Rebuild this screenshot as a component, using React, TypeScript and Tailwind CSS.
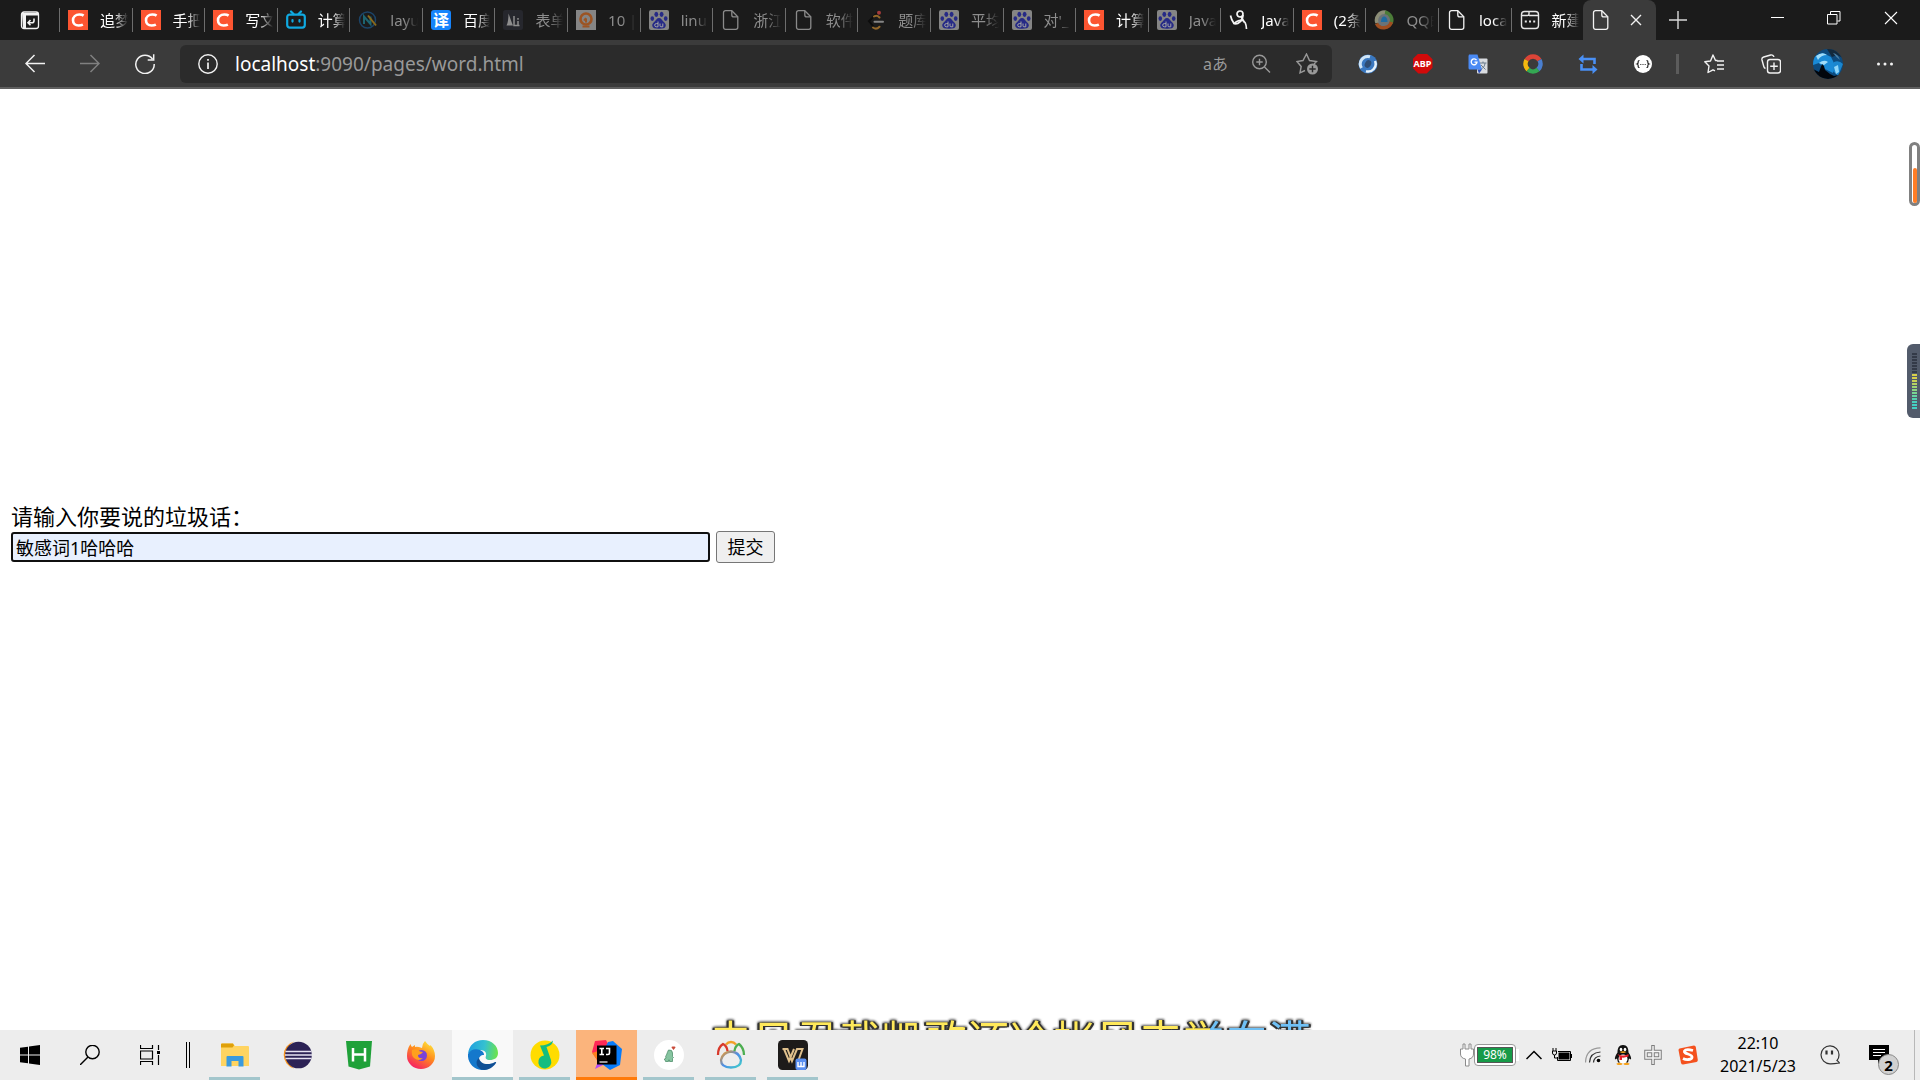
import React from "react";

type P = { children?: React.ReactNode };

const Csdn = () => (
  <svg viewBox="0 0 20 20" className="size-5">
    <rect width="20" height="20" fill="#fc5531" />
    <path d="M15.6 5.6C14.5 4.8 13 4.5 11.3 4.5 7.6 4.5 5 6.9 5 10.3c0 3.100 2.200 5.200 5.600 5.200 1.700 0 3.100-.3 4.300-.9" fill="none" stroke="#fff" strokeWidth="2.600" />
  </svg>
);

const Bili = () => (
  <svg viewBox="0 0 20 20" className="size-5" fill="none" stroke="#10a9e0" strokeWidth="2.200" strokeLinecap="round">
    <rect x="1.200" y="4.600" width="17.600" height="13" rx="2.500" />
    <path d="M5 1.500l2.500 2.600M15 1.500l-2.500 2.600M6.500 10v1.600M13.500 10v1.600" />
  </svg>
);

const Layui = () => (
  <svg viewBox="0 0 20 20" className="size-5" fill="none">
    <circle cx="9.500" cy="10" r="8" stroke="#1c4468" strokeWidth="1.500" />
    <path d="M6 14V6.500l6.500 7.500V6.500" stroke="#1d6470" strokeWidth="2" />
    <path d="M10 5.500l8 10" stroke="#8a6a1c" strokeWidth="2" />
  </svg>
);

const Translate = () => (
  <span className="flex size-5 items-center justify-center rounded-[3px] bg-[#1684fc] text-base leading-5 font-bold text-white">译</span>
);

const LiDark = () => (
  <svg viewBox="0 0 20 20" className="size-5">
    <rect width="20" height="20" rx="2.500" fill="#26272d" />
    <path d="M3.500 15.500C5 13 5.500 8 5.500 3.500c1.500 4 3 8.500 4.500 12z" fill="#8e8e8e" />
    <path d="M11 6v9.500h5.500M15 8v1.800M15 11v4.500" stroke="#8e8e8e" strokeWidth="1.500" fill="none" />
  </svg>
);

const OrangeO = () => (
  <svg viewBox="0 0 20 20" className="size-5" fill="none">
    <rect width="20" height="20" fill="#858585" />
    <circle cx="10" cy="9" r="5.500" stroke="#9c5423" strokeWidth="2.600" />
    <path d="M10 8.500v4M8 10.500l2-2.500M6.500 16.500h7" stroke="#9c5423" strokeWidth="2" />
  </svg>
);

const Baidu = () => (
  <svg viewBox="0 0 20 20" className="size-5">
    <rect width="20" height="20" rx="2" fill="#858585" />
    <g fill="#262a86">
      <ellipse cx="7.300" cy="4.300" rx="1.900" ry="2.600" />
      <ellipse cx="12.600" cy="4.300" rx="1.900" ry="2.600" />
      <ellipse cx="3.300" cy="8.600" rx="1.800" ry="2.400" />
      <ellipse cx="16.700" cy="8.600" rx="1.800" ry="2.400" />
      <path d="M10 8c2.200 0 2.800 2 4.300 3.500 1.600 1.500 2.900 2.700 2.400 4.600-.6 2.300-2.700 2.600-6.700 2.600s-6.100-.3-6.700-2.600c-.5-1.900.8-3.100 2.400-4.600C7.200 10 7.800 8 10 8z" />
    </g>
    <path d="M9 11.500v5.300H7.300a1.500 1.500 0 010-3.200H9M11 13.500v2.300q0 1 1 1h1.800v-3.300" fill="none" stroke="#a5a5a5" strokeWidth="1" />
  </svg>
);

const Doc = ({ c = "#f2f2f2" }: { c?: string }) => (
  <svg viewBox="0 0 20 20" className="size-5" fill="none" stroke={c} strokeWidth="1.300">
    <path d="M4.500.7h6.300l6 6v10.600a2 2 0 01-2 2H4.500a2 2 0 01-2-2V2.700a2 2 0 012-2z" />
    <path d="M10.800.9v4a2 2 0 002 2h3.900" />
  </svg>
);

const Leet = () => (
  <svg viewBox="0 0 20 20" className="size-5" fill="none" strokeWidth="2" strokeLinecap="round">
    <path d="M11 3.500L3 11l4 5" stroke="#0c0c0c" />
    <path d="M8 6.500c2.500-1.500 4-.5 5.500 1M7 17.500c3 2.300 5 .8 6.500-.8" stroke="#94682a" />
    <path d="M8.500 11.800H17" stroke="#858585" />
    <circle cx="13" cy="2.800" r="2" fill="#a33b3b" />
  </svg>
);

const Runner = () => (
  <svg viewBox="0 0 20 20" className="size-5" fill="none" stroke="#f5f5f5" strokeWidth="1.700" strokeLinejoin="round">
    <path d="M1.500 5.500c.5 3 1.500 5 3.500 8 4 1.500 9-3 9-8.500" />
    <circle cx="11" cy="4" r="3" />
    <path d="M4.500 14c3-3 6-4 9-3.500 2.500.5 3.800 4.500 4 8.500M12 6.500l3.500 6" />
  </svg>
);

const QQBrowser = () => (
  <svg viewBox="0 0 20 20" className="size-5" fill="none" strokeWidth="3.500">
    <circle cx="10" cy="10" r="7" fill="#6a7378" />
    <path d="M3 13A8 8 0 0112 2.300" stroke="#8c8d77" />
    <path d="M11 2.200A8 8 0 0117 13.500" stroke="#4b7c38" />
    <path d="M17.300 12A8 8 0 012.500 13.500" stroke="#a04e20" />
    <path d="M7 12c0-3 1-5.500 3.200-5.500S13.500 9 13.500 12z" fill="#1f6ba0" />
  </svg>
);

const NewTab = () => (
  <svg viewBox="0 0 20 20" className="size-5" fill="none" stroke="#e6e6e6" strokeWidth="1.400">
    <rect x="1.500" y="1.500" width="17" height="17" rx="3" />
    <path d="M1.500 5.500h6q1.500 0 1.500-1.500V1.500M9 5.500h9.500" />
    <path d="M4.800 11.500h2M9 11.500h2M13.200 11.500h2" strokeWidth="2" />
  </svg>
);

const tabs: { icon: React.ReactNode; text: string; dim?: boolean }[] = [
  { icon: <Csdn />, text: "追梦" },
  { icon: <Csdn />, text: "手把" },
  { icon: <Csdn />, text: "写文" },
  { icon: <Bili />, text: "计算" },
  { icon: <Layui />, text: "layui", dim: true },
  { icon: <Translate />, text: "百度" },
  { icon: <LiDark />, text: "表单", dim: true },
  { icon: <OrangeO />, text: "10 |", dim: true },
  { icon: <Baidu />, text: "linux", dim: true },
  { icon: <Doc c="#8a8a8a" />, text: "浙江", dim: true },
  { icon: <Doc c="#8a8a8a" />, text: "软件", dim: true },
  { icon: <Leet />, text: "题库", dim: true },
  { icon: <Baidu />, text: "平均", dim: true },
  { icon: <Baidu />, text: "对'_", dim: true },
  { icon: <Csdn />, text: "计算" },
  { icon: <Baidu />, text: "Java", dim: true },
  { icon: <Runner />, text: "Java" },
  { icon: <Csdn />, text: "(2条" },
  { icon: <QQBrowser />, text: "QQ邮", dim: true },
  { icon: <Doc />, text: "local" },
  { icon: <NewTab />, text: "新建" },
];

const IconButton = ({ label, w, children }: P & { label: string; w: string }) => (
  <button type="button" aria-label={label} className={`flex h-full shrink-0 items-center justify-center ${w}`}>
    {children}
  </button>
);

function TabStrip() {
  return (
    <div className="flex h-10 items-stretch bg-[#1b1b1b]">
      <IconButton label="标签操作菜单" w="w-[59px]">
        <svg viewBox="0 0 20 20" className="size-5" fill="none" stroke="#f2f2f2" strokeWidth="1.300">
          <rect x="1.500" y="2" width="17" height="16.500" rx="2.500" />
          <path d="M2 3h16v2.500H6V18H3z" fill="#f2f2f2" stroke="none" />
          <path d="M14 8.500v2.300a2 2 0 01-2 2H8M10.500 10L8 12.800l2.500 2.500" strokeWidth="1.600" />
        </svg>
      </IconButton>
      <nav aria-label="标签页" className="flex min-w-0 flex-1">
        {tabs.map((t, i) => (
          <button key={i} type="button" className="relative flex min-w-0 flex-1 items-center gap-3 pr-1 pl-[9px] text-left">
            <span className="absolute top-2 left-0 h-6 w-px bg-[#6d6d6d]" />
            <span className="shrink-0">{t.icon}</span>
            <span
              className={`min-w-0 flex-1 overflow-hidden text-[15px] leading-5 whitespace-nowrap [mask-image:linear-gradient(to_right,black_50%,transparent)] ${t.dim ? "text-[#8d8d8d]" : "text-white"}`}
            >
              {t.text}
            </span>
          </button>
        ))}
      </nav>
      <div className="flex w-[73px] items-center justify-between rounded-t-lg bg-[#3b3b3b] pr-[14px] pl-2">
        <Doc />
        <button type="button" aria-label="关闭标签页">
          <svg viewBox="0 0 12 12" className="size-3" stroke="#f2f2f2" strokeWidth="1.400">
            <path d="M1 1l10 10M11 1L1 11" />
          </svg>
        </button>
      </div>
      <div className="flex w-[264px] pr-px">
        <IconButton label="新建标签页" w="w-11">
          <svg viewBox="0 0 18 18" className="size-[18px]" stroke="#d8d8d8" strokeWidth="1.400">
            <path d="M9 0v18M0 9h18" />
          </svg>
        </IconButton>
        <div className="ml-auto flex h-9">
          <IconButton label="最小化" w="w-[57px]">
            <svg viewBox="0 0 14 14" className="size-[14px]" stroke="#fff">
              <path d="M1 6.500h13" />
            </svg>
          </IconButton>
          <IconButton label="还原" w="w-[57px]">
            <svg viewBox="0 0 14 14" className="size-[14px]" fill="none" stroke="#fff">
              <path d="M.5 3.500h9.500v9.500H.5zM3.500 3V.5h9.500V10h-2.500" />
            </svg>
          </IconButton>
          <IconButton label="关闭" w="w-[57px]">
            <svg viewBox="0 0 14 14" className="size-[14px]" stroke="#fff" strokeWidth="1.100">
              <path d="M1 1l12 12M13 1L1 13" />
            </svg>
          </IconButton>
        </div>
      </div>
    </div>
  );
}

function Toolbar() {
  return (
    <div className="flex h-[49px] items-center border-b-2 border-[#5f5f5f] bg-[#3b3b3b] pr-[7px] pl-[7px]">
      <IconButton label="后退" w="w-[55px]">
        <svg viewBox="0 0 20 20" className="size-5" fill="none" stroke="#f2f2f2" strokeWidth="1.500">
          <path d="M20 9.500H1M9.500 1L1 9.500 9.500 18" />
        </svg>
      </IconButton>
      <IconButton label="前进" w="w-[55px]">
        <svg viewBox="0 0 20 20" className="size-5" fill="none" stroke="#808080" strokeWidth="1.500">
          <path d="M0 9.500h19M10.500 1L19 9.500 10.500 18" />
        </svg>
      </IconButton>
      <IconButton label="刷新" w="w-[55px]">
        <svg viewBox="0 0 20 20" className="size-5" fill="none" stroke="#f2f2f2" strokeWidth="1.500">
          <path d="M17.500 5A9.200 9.200 0 1019.200 10M18.700.3V6h-6" />
        </svg>
      </IconButton>
      <div className="ml-2 flex h-[38px] min-w-0 flex-1 items-center rounded-md bg-[#2b2b2b] pr-3 pl-[18px]">
        <svg viewBox="0 0 20 20" className="size-5 shrink-0" fill="none" stroke="#f2f2f2" strokeWidth="1.400">
          <circle cx="10" cy="10" r="9.200" />
          <path d="M10 8.500V15M10 5v1.700" strokeWidth="1.700" />
        </svg>
        <p className="ml-[17px] flex-1 text-[19px] leading-6 whitespace-nowrap text-[#999]">
          <span className="text-white">localhost</span>:9090/pages/word.html
        </p>
        <button type="button" className="mr-[23px] text-base leading-6 text-[#999]">aあ</button>
        <button type="button" aria-label="缩放" className="mr-[25px]">
          <svg viewBox="0 0 20 20" className="size-5" fill="none" stroke="#999" strokeWidth="1.400">
            <circle cx="8.500" cy="8" r="6.800" />
            <path d="M13.500 13l5.500 5.500M8.500 4.800v6.400M5.300 8h6.400" />
          </svg>
        </button>
        <button type="button" aria-label="添加到收藏夹">
          <svg viewBox="0 0 24 22" className="h-[22px] w-6" fill="none" stroke="#999" strokeWidth="1.400">
            <path d="M9 17.500l-5 2.300 1.200-6.300L1 8.500l6-1L10.500 1l3 6.500 7 1-2.500 2.500" />
            <circle cx="16.500" cy="16" r="5.500" fill="#999" stroke="none" />
            <path d="M16.500 12.800v6.400M13.300 16h6.400" stroke="#2b2b2b" />
          </svg>
        </button>
      </div>
      <div className="ml-2 flex h-full items-center">
        <IconButton label="扩展" w="w-[55px]">
          <svg viewBox="0 0 20 20" className="size-5" fill="none">
            <circle cx="10" cy="10" r="9.500" fill="#3a78c0" />
            <path d="M3.500 14A7.500 7.500 0 0112 2.800" stroke="#cfe5f7" strokeWidth="3" />
            <path d="M17 7a7.500 7.500 0 01-9 10.200" stroke="#e6f2fb" strokeWidth="2.500" />
            <ellipse cx="10" cy="10" rx="3" ry="4" fill="#2f4d73" transform="rotate(30 10 10)" />
          </svg>
        </IconButton>
        <IconButton label="Adblock Plus" w="w-[55px]">
          <span className="flex size-5 items-center justify-center bg-[#d20a0a] text-[9px] leading-5 font-bold text-white [clip-path:polygon(29%_0,71%_0,100%_29%,100%_71%,71%_100%,29%_100%,0_71%,0_29%)]">ABP</span>
        </IconButton>
        <IconButton label="谷歌翻译" w="w-[55px]">
          <svg viewBox="0 0 20 20" className="size-5" fill="none">
            <rect x="9" y="4.500" width="10.500" height="15" rx="1" fill="#d9dce0" />
            <path d="M12 9h6.500M15 7.500V9M17 9c0 3-2 5.500-4.500 6.500M13 11l4.500 4.500" stroke="#6b7c8c" />
            <path d="M1 .5h8.500l4.500 15H2a1.500 1.500 0 01-1.500-1.500V2z" fill="#4a8af4" />
            <path d="M9.500 15.500h4.500l-3 4z" fill="#2b4fb8" />
            <path d="M8.500 6.200A2.900 2.900 0 109 8.200H6.500" stroke="#fff" strokeWidth="1.300" />
          </svg>
        </IconButton>
        <IconButton label="搜索扩展" w="w-[55px]">
          <svg viewBox="0 0 20 20" className="size-5" fill="none" strokeWidth="4.500">
            <path d="M3.500 6.200A7.500 7.500 0 0116.500 6.200" stroke="#dc4437" />
            <path d="M16.500 6.200A7.500 7.500 0 0115 15.500" stroke="#4a7fd0" />
            <path d="M15 15.500A7.500 7.500 0 015 15.500" stroke="#34a853" />
            <path d="M5 15.500A7.500 7.500 0 013.500 6.200" stroke="#f4b90f" />
          </svg>
        </IconButton>
        <IconButton label="循环" w="w-[55px]">
          <svg viewBox="0 0 20 20" className="size-5" fill="none" stroke="#4a90f5" strokeWidth="2.600">
            <path d="M4 5h12.500v5M16 15.500H3.500V10" />
            <path d="M5.500.5v9L.5 5zM14.500 11v9l5-4.500z" fill="#4a90f5" stroke="none" />
          </svg>
        </IconButton>
        <IconButton label="JSON 工具" w="w-[55px]">
          <svg viewBox="0 0 18 18" className="size-[18px]" fill="none" stroke="#222" strokeWidth="1.200">
            <circle cx="9" cy="9" r="9" fill="#fff" stroke="none" />
            <path d="M5.500 5.500Q4 5.500 4.200 7T3 9q1.400.5 1.200 2t1.300 1.500M12.500 5.500q1.500 0 1.300 1.500T15 9q-1.400.5-1.200 2t-1.300 1.500M6.300 9.500h1M8.500 9.500h1M10.700 9.500h1" />
          </svg>
        </IconButton>
        <span className="mx-[6px] h-5 w-[3px] bg-[#5c5c5c]" />
        <IconButton label="收藏夹" w="w-[57px]">
          <svg viewBox="0 0 20 20" className="size-5" fill="none" stroke="#f2f2f2" strokeWidth="1.400" strokeLinejoin="round">
            <path d="M13.500 6.500h-2L9 1 6.500 7 .8 7.800 5 12l-1 6.500 5-2.700 2 1M13 7h7M13 11h7M13 15h7" />
          </svg>
        </IconButton>
        <IconButton label="集锦" w="w-[57px]">
          <svg viewBox="0 0 20 20" className="size-5" fill="none" stroke="#f2f2f2" strokeWidth="1.400">
            <rect x="6.500" y="5.500" width="13" height="13.500" rx="2.500" />
            <path d="M13 8.500v7.500M9.200 12.300h7.600M4.500 14.500a3 3 0 01-1.700-2L1 6a2.500 2.500 0 011.700-3l7-2c1.500-.4 3 .5 3.200 2" />
          </svg>
        </IconButton>
        <IconButton label="个人资料" w="w-[57px]">
          <svg viewBox="0 0 30 30" className="size-[30px] rounded-full">
            <rect width="30" height="30" fill="#0d4a7d" />
            <path d="M0 8L10 4l8 4 4 8-2 8-8-4-6-6-6 2z" fill="#1a8ad6" />
            <path d="M3 7q6-5 11-1-6 0-9 5zM6 14q5-4 9-1l-4 3z" fill="#9fdcf9" />
            <path d="M14 0h16v9l-6-3-5 2z" fill="#13293c" />
            <path d="M20 4q5 1 7 7-4-3-7-7z" fill="#4b7fa5" />
            <path d="M21 13q5-2 9 2l-5 12-5-5z" fill="#1a86cf" />
            <path d="M21 18l4-2 1 7-3 2z" fill="#8fd6fa" />
            <path d="M0 20l6 3 3-8 2 2 1 4 5 4 4 2 9-2v5H0z" fill="#02060c" />
          </svg>
        </IconButton>
        <IconButton label="设置及其他" w="w-[57px]">
          <svg viewBox="0 0 18 4" className="h-1 w-[18px]" fill="#f2f2f2">
            <circle cx="2.500" cy="2" r="1.500" />
            <circle cx="9" cy="2" r="1.500" />
            <circle cx="15.500" cy="2" r="1.500" />
          </svg>
        </IconButton>
      </div>
    </div>
  );
}

function Page() {
  return (
    <main className="relative flex-1 overflow-hidden bg-white text-black">
      <form className="px-[11px] pt-[413px]" onSubmit={(e) => e.preventDefault()}>
        <label htmlFor="word" className="block text-[22px] leading-[29px]">请输入你要说的垃圾话：</label>
        <div className="flex items-center gap-[6px]">
          <input
            id="word"
            type="text"
            defaultValue="敏感词1哈哈哈"
            className="h-[30px] w-[699px] rounded-[3px] border-2 border-[#101010] bg-[#e8f0fe] px-[3px] text-lg leading-6 outline-none"
          />
          <button type="submit" className="h-8 w-[59px] rounded-[3px] border border-[#767676] bg-[#efefef] text-lg leading-6">提交</button>
        </div>
      </form>
      <div className="absolute top-[53px] right-0 h-16 w-[11px] rounded-md border-[3px] border-[#808080] bg-white">
        <span className="absolute right-0 bottom-0 left-px h-[35px] rounded-sm bg-[#ff7d26]" />
      </div>
      <div className="absolute top-[255px] right-0 flex h-[74px] w-[13px] flex-col justify-center gap-px rounded-l-md bg-[#525b6b] pr-[3px] pl-[5px]">
        {["#333a48", "#333a48", "#333a48", "#333a48", "#333a48", "#333a48", "#333a48", "#d8cf4b", "#d8cf4b", "#c9d255", "#b5d463", "#9fd674", "#8cd783", "#78d693", "#66d5a3", "#55d3b0", "#48d0bc", "#43d0c4", "#43d0c4"].map((c, i) => (
          <span key={i} className="h-[2px]" style={{ backgroundColor: c }} />
        ))}
      </div>
      <p className="absolute -bottom-9 left-[709px] bg-[linear-gradient(to_right,#ffe95a_501px,#6fc0f5_501px)] bg-clip-text text-[43px] leading-[50px] whitespace-nowrap text-transparent [filter:drop-shadow(2px_0_0_#333)_drop-shadow(-2px_0_0_#333)_drop-shadow(0_1px_0_#333)_drop-shadow(0_-1px_1px_#555)]">
        未见君载凯歌还冷帐风来觉向满
      </p>
    </main>
  );
}

const apps: { name: string; line?: string; bg?: string; icon: React.ReactNode }[] = [
  {
    name: "文件资源管理器",
    line: "bg-[#a3c6cc] mx-[5px]",
    icon: (
      <svg viewBox="0 0 28 24" className="h-6 w-7">
        <path d="M0 1.500Q0 .5 1 .5h11l2 2.500h13q1 0 1 1V23H0z" fill="#ffd461" />
        <path d="M0 1.500Q0 .5 1 .5h11l1 2-1.500 2H0z" fill="#dfa009" />
        <path d="M5.500 23.500V14q0-1 1-1h15q1 0 1 1v9.500h-5V18h-7v5.500z" fill="#3a9ade" />
      </svg>
    ),
  },
  {
    name: "Eclipse",
    icon: (
      <svg viewBox="0 0 30 28" className="h-7 w-[30px]">
        <path d="M12 .5A14 14 0 0012 27.500Q3 20 4 13 5 5 12 .5z" fill="#f7941e" />
        <circle cx="16.500" cy="14" r="13.300" fill="#2c2255" />
        <path d="M3.500 10.500h26M3 14h27M3.500 17.500h26" stroke="#e6e3f2" strokeWidth="1.700" />
      </svg>
    ),
  },
  {
    name: "HBuilder",
    icon: (
      <svg viewBox="0 0 26 30" className="h-[30px] w-[26px]">
        <path d="M0 1h26l-2 25.500L13 29.500 2.500 26.500z" fill="#1fa139" />
        <path d="M7 8v13.500M19 8v13.500M7 14.500h12" stroke="#fff" strokeWidth="2.500" />
      </svg>
    ),
  },
  {
    name: "Firefox",
    icon: (
      <svg viewBox="0 0 28 28" className="size-7">
        <defs>
          <linearGradient id="ff" x1=".8" y1="0" x2=".2" y2="1">
            <stop offset="0" stopColor="#ffe63a" />
            <stop offset=".45" stopColor="#ff8a1e" />
            <stop offset="1" stopColor="#f5156c" />
          </linearGradient>
        </defs>
        <path d="M18 0q2 3 5 5l.5-1q4.500 5 4.500 11A14 13 0 010 15Q0 8 3.500 3q.5 2 1.500 3l3-2v2q2-1 7 1 0-4 3-7z" fill="url(#ff)" />
        <circle cx="14.500" cy="14.500" r="5.500" fill="#7a42d8" />
        <path d="M5 9q5-2 8 1.500l3 .5q-2 3-5 3 0 4 5 3-4 4-9 0-3-3-2-8z" fill="#ffa01e" />
      </svg>
    ),
  },
  {
    name: "Edge",
    bg: "bg-[#f9f9f9]",
    line: "bg-[#a3c6cc]",
    icon: (
      <svg viewBox="0 0 30 30" className="size-[30px]">
        <defs>
          <linearGradient id="eg" x1="0" y1=".3" x2="1" y2=".4">
            <stop offset="0" stopColor="#1f9fe0" />
            <stop offset=".55" stopColor="#35c1d0" />
            <stop offset="1" stopColor="#6be34d" />
          </linearGradient>
        </defs>
        <path d="M0 14C1 5 7 0 15 0c9 0 15 6 15 13 0 5-4 7-8 7-4 0-5-2-4-4 1-4-2-6-6-6C6 10 1 12 0 14z" fill="url(#eg)" />
        <path d="M0 14c2-4 7-6 12-4 3 1 4 3 4 5-4 0-6 3-5 7 1 5 5 7 9 7-10 4-21-4-20-15z" fill="#1478cc" />
        <path d="M11 18c1 6 9 8 16 4q1.500-.5 1 1c-4 6-10 8-15 6.500C8 27 7 21 11 18z" fill="#0f4f95" />
      </svg>
    ),
  },
  {
    name: "QQ音乐",
    line: "bg-[#a3c6cc] mx-[5px]",
    icon: (
      <svg viewBox="0 0 30 30" className="size-[30px]">
        <circle cx="15" cy="15" r="14.500" fill="#ffdc00" />
        <path d="M10 5.500q8 0 13-5-.5 5-6.500 6.500L21 20a6.500 6.500 0 11-7-4.500z" fill="#14bd80" />
      </svg>
    ),
  },
  {
    name: "IntelliJ IDEA",
    bg: "bg-[#fbb47c]",
    line: "bg-[#ff7a0a]",
    icon: (
      <svg viewBox="0 0 30 30" className="size-[30px]">
        <path d="M3 1l11-1 4 8L5 20 0 12z" fill="#fe2857" />
        <path d="M0 13l6-2v10z" fill="#fc801d" />
        <path d="M3 29l4-10 8 4z" fill="#b74af7" />
        <path d="M16 2l5-1 9 8-2 16-10 5-12-9z" fill="#087cfa" />
        <rect x="5" y="5.500" width="19.500" height="19" fill="#000" />
        <path d="M7.500 8.500h4.500M9.800 8.500v6M7.500 14.500h4.500M14 8.500h3.500v4.500q0 1.500-1.500 1.500h-2" fill="none" stroke="#fff" strokeWidth="1.600" />
        <path d="M7.500 22h8" stroke="#aaa" strokeWidth="1.800" />
      </svg>
    ),
  },
  {
    name: "宠物",
    line: "bg-[#a3c6cc] mx-[5px]",
    icon: (
      <svg viewBox="0 0 30 30" className="size-[30px]">
        <circle cx="15" cy="15" r="15" fill="#fff" />
        <path d="M14.500 10q4-.5 4 3v3.500l1 1-1 1v3h-3v-1.500h-1V21.500h-3v-1l-1.500-1 2-1.500q-1-2 .5-3 .5-2 2-5z" fill="#86c4a0" stroke="#4f8f6c" strokeWidth=".8" />
        <path d="M19.500 10l-2-2.500q0-1.500 2-1 2-.5 2 1z" fill="#c94b3a" />
      </svg>
    ),
  },
  {
    name: "Navicat",
    line: "bg-[#a3c6cc] mx-[5px]",
    icon: (
      <svg viewBox="0 0 30 30" className="size-[30px]" fill="none" strokeWidth="2.300">
        <defs>
          <linearGradient id="nv" x1="0" y1="0" x2="1" y2="1">
            <stop offset="0" stopColor="#f59a22" />
            <stop offset=".5" stopColor="#4c8ee8" />
            <stop offset="1" stopColor="#3fd0c8" />
          </linearGradient>
        </defs>
        <path d="M5 20q2-8 10-8.500 8 .5 10 8.500 0 7.500-10 7.500T5 20z" stroke="url(#nv)" />
        <path d="M2 15q0-8 5-11 4 2 4.500 7" stroke="#d8392b" />
        <path d="M10 4.500Q12 2 15 2t5 2.500" stroke="#f0a028" />
        <path d="M18.500 11q.5-5 4.500-7 5 4 5 11" stroke="#4cae50" />
      </svg>
    ),
  },
  {
    name: "WPS",
    line: "bg-[#a3c6cc] mx-[5px]",
    icon: (
      <svg viewBox="0 0 30 30" className="size-[30px]" fill="none">
        <rect width="30" height="30" rx="4.500" fill="#1d1b1a" />
        <path d="M4.500 9h5l4.500 12 5-12h5.500l-4 11M6 9l5 12 5-12" stroke="#dfc08c" strokeWidth="2" />
        <rect x="17.500" y="18.500" width="11" height="11.500" rx="2" fill="#5a8ff0" />
        <path d="M20 22v4.500h6V22M23 22v4" stroke="#fff" strokeWidth="1.400" />
      </svg>
    ),
  },
];

function Taskbar() {
  return (
    <footer className="flex h-[50px] shrink-0 bg-[#ededed] text-black">
      <IconButton label="开始" w="w-[60px]">
        <svg viewBox="0 0 20 20" className="size-5">
          <path d="M0 2.800L8 1.700V9.400H0zM9 1.500L20 0v9.400H9zM0 10.400h8v7.800L0 17.200zM9 10.400h11V20L9 18.400z" />
        </svg>
      </IconButton>
      <IconButton label="搜索" w="w-[60px]">
        <svg viewBox="0 0 20 20" className="size-5" fill="none" stroke="#000" strokeWidth="1.400">
          <circle cx="12.500" cy="7" r="6.700" />
          <path d="M8 12l-8 8" />
        </svg>
      </IconButton>
      <IconButton label="任务视图" w="w-[60px]">
        <svg viewBox="0 0 20 20" className="size-5" fill="none" stroke="#000" strokeWidth="1.200">
          <path d="M.5 0v3.500h12V0M.5 20v-3.500h12V20M.5 6h12v8H.5zM18.500 0v5M18.500 10v10" />
          <rect x="17" y="6" width="3" height="3" fill="#000" stroke="none" />
        </svg>
      </IconButton>
      <span className="mr-[14px] ml-[6px] h-[26px] w-1 self-center border-x border-black" />
      {apps.map((a) => (
        <button key={a.name} type="button" aria-label={a.name} className={`mr-px flex w-[61px] shrink-0 flex-col ${a.bg ?? ""}`}>
          <span className="flex h-[47px] items-center justify-center pt-[3px]">{a.icon}</span>
          {a.line && <span className={`h-[3px] self-stretch ${a.line}`} />}
        </button>
      ))}
      <div className="ml-auto flex items-center">
        <div className="flex w-[61px] items-center">
          <svg viewBox="0 0 14 24" className="h-6 w-[14px]" fill="#fff" stroke="#8c8c8c">
            <path d="M3 1h2v5h4V1h2v5h2.500v5q0 4-4.500 5v7H5.500v-7Q.5 15 .5 11V6H3z" />
          </svg>
          <span className="flex h-[22px] w-[42px] items-center justify-center rounded-sm border border-[#999] bg-white p-[2px]">
            <span className="flex h-full w-full items-center justify-center border border-[#555] bg-[#169a48] text-xs leading-4 text-white">98%</span>
          </span>
          <span className="h-3 w-[3px] bg-white" />
        </div>
        <IconButton label="显示隐藏的图标" w="w-[25px]">
          <svg viewBox="0 0 16 10" className="h-[10px] w-4" fill="none" stroke="#000" strokeWidth="1.500">
            <path d="M.5 9L8 1.500 15.500 9" />
          </svg>
        </IconButton>
        <span className="flex w-8 justify-center">
          <svg viewBox="0 0 20 14" className="h-[14px] w-5" fill="none" stroke="#000">
            <path d="M6 3.500h12.500v9H5.500V9" />
            <rect x="7" y="5" width="10" height="6" fill="#000" />
            <path d="M19.500 6v4M1 0v3M4 0v3M.5 3h4v2q0 2-2 2t-2-2zM2.500 7v3h3" />
          </svg>
        </span>
        <span className="flex w-[30px] justify-center">
          <svg viewBox="0 0 16 16" className="size-4" fill="none" stroke="#777" strokeWidth="1.200">
            <path d="M.5 15.500Q1 1 15.500.8" stroke="#999" />
            <path d="M4.500 15.500Q5 5.500 15.500 5M8.500 15.500Q9 9.500 15.500 9" stroke="#333" />
            <circle cx="13.500" cy="13.500" r="1.800" fill="#000" stroke="none" />
          </svg>
        </span>
        <span className="flex w-[30px] justify-center">
          <svg viewBox="0 0 18 20" className="h-5 w-[18px]">
            <path d="M9 0c4 0 5.500 3 5.500 7.500 2 3 3 5 2.500 7l-2-1-1 4H4l-1-4-2 1c-.5-2 .5-4 2.500-7C3.500 3 5 0 9 0z" fill="#111" />
            <ellipse cx="9" cy="14" rx="4.500" ry="4.500" fill="#fff" />
            <ellipse cx="7" cy="4.500" rx="1.300" ry="1.800" fill="#fff" />
            <ellipse cx="11" cy="4.500" rx="1.300" ry="1.800" fill="#fff" />
            <path d="M3.500 9q5.500 3 11 0v2.500Q10 13 8 12.500V15H5.500v-3.500z" fill="#e5202b" />
            <path d="M5.500 7q3.500 2 7 0-3.500-1.500-7 0zM2.500 18.500q3-1.500 6 0 0 1.500-3 1.500t-3-1.500zM9.500 18.500q3-1.500 6 0 0 1.500-3 1.500t-3-1.500z" fill="#f7a31c" />
          </svg>
        </span>
        <span className="flex w-[30px] justify-center">
          <svg viewBox="0 0 18 20" className="h-5 w-[18px]" fill="none">
            <path d="M2 6.500h14v6.500H2zM9 0v20" stroke="#7c7c7c" strokeWidth="3.500" />
            <path d="M2 6.500h14v6.500H2zM9 1v18" stroke="#f5f5f5" strokeWidth="1.500" />
          </svg>
        </span>
        <span className="flex w-10 justify-center">
          <svg viewBox="0 0 20 20" className="size-5" fill="none">
            <path d="M1.500 3.500L16 .5q1.500 0 1.800 1.500l2 13q0 1.500-1.300 2L5 19.500q-1.500 0-2-1.500L.5 5q0-1 1-1.500z" fill="#f4511e" />
            <path d="M15 5.500q-7-2-8.500.5c-1.500 3 8.500 3 7.500 6.500-.8 2.500-6 2.500-9 1" stroke="#fff" strokeWidth="2.800" />
          </svg>
        </span>
        <button type="button" className="w-[100px] text-center text-[16px] leading-[23px]">
          <span className="block">22:10</span>
          <span className="block">2021/5/23</span>
        </button>
        <IconButton label="输入法表情" w="w-11">
          <svg viewBox="0 0 20 20" className="size-5" fill="none" stroke="#333" strokeWidth="1.200">
            <path d="M17 15.500q1.500 1 2.500 2.500-7 1-9.500.8A9 9 0 1119 10q0 3.500-2 5.500z" />
            <path d="M6.500 5.500v4M12 5.500v4" strokeWidth="2.200" />
          </svg>
        </IconButton>
        <button type="button" aria-label="通知" className="relative flex h-full w-[62px] items-center pl-[17px]">
          <svg viewBox="0 0 20 20" className="size-5">
            <path d="M0 0h20v15h-7l-4 4v-4H0z" />
            <path d="M4 4.500h12M4 7.500h12M4 10.500h8" stroke="#fff" strokeWidth="1.200" />
          </svg>
          <span className="absolute top-6 left-[26px] flex size-[21px] items-center justify-center rounded-full border border-[#888] bg-[#d0d0d0] text-[15px] leading-5 font-bold">2</span>
        </button>
        <span className="mr-[5px] h-full w-px bg-[#b8b8b8]" />
      </div>
    </footer>
  );
}

export default function App() {
  return (
    <div className="flex min-h-screen flex-col font-['Noto_Sans','Noto_Sans_CJK_SC',sans-serif]">
      <header className="shrink-0">
        <TabStrip />
        <Toolbar />
      </header>
      <Page />
      <Taskbar />
    </div>
  );
}
